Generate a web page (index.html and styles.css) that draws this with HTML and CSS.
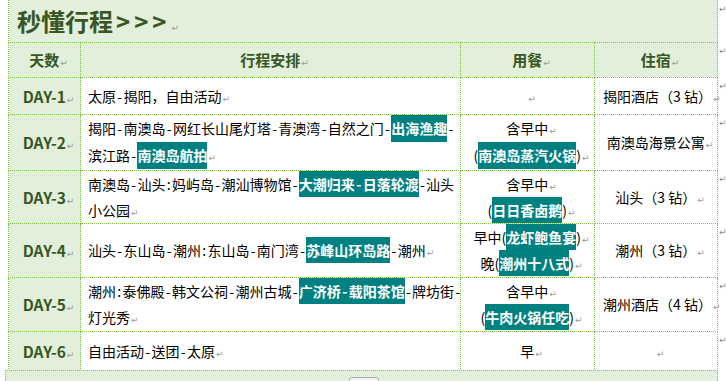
FILE: index.html
```html
<!DOCTYPE html>
<html lang="zh-CN">
<head>
<meta charset="utf-8">
<title>秒懂行程</title>
<link rel="stylesheet" href="styles.css">
</head>
<body>
<div class="page">
  <table class="trip">
    <colgroup>
      <col class="c-day"><col class="c-plan"><col class="c-meal"><col class="c-hotel"><col class="c-end">
    </colgroup>
    <tr class="r-title">
      <td colspan="4" class="title">秒懂行程<span class="arrows">&gt;&gt;&gt;</span><span class="m">↵</span></td>
      <td class="end">↵</td>
    </tr>
    <tr class="r-head">
      <th class="center">天数<span class="m">↵</span></th>
      <th class="center">行程安排<span class="m">↵</span></th>
      <th class="center">用餐<span class="m">↵</span></th>
      <th class="center">住宿<span class="m">↵</span></th>
      <td class="end">↵</td>
    </tr>
    <tr class="r-1">
      <th class="day">DAY-1<span class="m">↵</span></th>
      <td class="plan">太原<span class="d">-</span>揭阳，自由活动<span class="m">↵</span></td>
      <td class="center"><span class="m">↵</span></td>
      <td class="center">揭阳酒店（3 钻）<span class="m">↵</span></td>
      <td class="end">↵</td>
    </tr>
    <tr class="r-2">
      <th class="day">DAY-2<span class="m">↵</span></th>
      <td class="plan tall">揭阳<span class="d">-</span>南澳岛<span class="d">-</span>网红长山尾灯塔<span class="d">-</span>青澳湾<span class="d">-</span>自然之门<span class="d">-</span><span class="hl">出海渔趣</span><span class="d">-</span><br>滨江路<span class="d">-</span><span class="hl">南澳岛航拍</span><span class="m">↵</span></td>
      <td class="center tall">含早中<span class="m">↵</span><br>(<span class="hl">南澳岛蒸汽火锅</span>)<span class="m">↵</span></td>
      <td class="center">南澳岛海景公寓<span class="m">↵</span></td>
      <td class="end">↵</td>
    </tr>
    <tr class="r-3">
      <th class="day">DAY-3<span class="m">↵</span></th>
      <td class="plan">南澳岛<span class="d">-</span>汕头<span class="d">:</span>妈屿岛<span class="d">-</span>潮汕博物馆<span class="d">-</span><span class="hl">大潮归来<span class="d">-</span>日落轮渡</span><span class="d">-</span>汕头<br>小公园<span class="m">↵</span></td>
      <td class="center">含早中<span class="m">↵</span><br>(<span class="hl">日日香卤鹅</span>)<span class="m">↵</span></td>
      <td class="center">汕头（3 钻）<span class="m">↵</span></td>
      <td class="end">↵</td>
    </tr>
    <tr class="r-4">
      <th class="day">DAY-4<span class="m">↵</span></th>
      <td class="plan">汕头<span class="d">-</span>东山岛<span class="d">-</span>潮州<span class="d">:</span>东山岛<span class="d">-</span>南门湾<span class="d">-</span><span class="hl">苏峰山环岛路</span><span class="d">-</span>潮州<span class="m">↵</span></td>
      <td class="center">早中(<span class="hl">龙虾鲍鱼宴</span>)<span class="m">↵</span><br>晚(<span class="hl">潮州十八式</span>)<span class="m">↵</span></td>
      <td class="center">潮州（3 钻）<span class="m">↵</span></td>
      <td class="end">↵</td>
    </tr>
    <tr class="r-5">
      <th class="day">DAY-5<span class="m">↵</span></th>
      <td class="plan">潮州<span class="d">:</span>泰佛殿<span class="d">-</span>韩文公祠<span class="d">-</span>潮州古城<span class="d">-</span><span class="hl">广济桥<span class="d">-</span>载阳茶馆</span><span class="d">-</span>牌坊街<span class="d">-</span><br>灯光秀<span class="m">↵</span></td>
      <td class="center">含早中<span class="m">↵</span><br>(<span class="hl">牛肉火锅任吃</span>)<span class="m">↵</span></td>
      <td class="center">潮州酒店（4 钻）<span class="m">↵</span></td>
      <td class="end">↵</td>
    </tr>
    <tr class="r-6">
      <th class="day">DAY-6<span class="m">↵</span></th>
      <td class="plan">自由活动<span class="d">-</span>送团<span class="d">-</span>太原<span class="m">↵</span></td>
      <td class="center">早<span class="m">↵</span></td>
      <td class="center"><span class="m">↵</span></td>
      <td class="end">↵</td>
    </tr>
  </table>
  <div class="next">
    <span class="handle"></span>
  </div>
</div>
</body>
</html>
```

FILE: styles.css
```css
html, body {
  margin: 0;
  background: #ffffff;
}

body {
  font-family: "Noto Sans CJK SC", "Noto Sans", sans-serif;
  color: #000000;
}

.page {
  padding-left: 5px;
}

.trip {
  margin-left: 3px;
  border-collapse: collapse;
  table-layout: fixed;
  width: 718px;
}

.c-day { width: 72px; }
.c-plan { width: 380px; }
.c-meal { width: 134px; }
.c-hotel { width: 123px; }
.c-end { width: 9px; }

.trip td,
.trip th {
  padding: 0;
  border: 1px dotted #7cc43c;
  font-size: 14px;
  line-height: 26px;
  font-weight: normal;
  vertical-align: middle;
  white-space: nowrap;
}

.trip td.tall {
  line-height: 27px;
}

.trip td.end {
  border: none;
  vertical-align: top;
  font-family: "DejaVu Sans", sans-serif;
  font-size: 9px;
  line-height: 12px;
  color: #8a8a8a;
  padding: 3px 0 0 1px;
}

.r-title { height: 42px; }
.r-head { height: 35px; }
.r-1 { height: 37px; }
.r-2 { height: 56px; }
.r-3 { height: 53px; }
.r-4 { height: 54px; }
.r-5 { height: 54px; }
.r-6 { height: 39px; }

.trip td.title {
  border-top: none;
  background: #e2efda;
  color: #385623;
  font-size: 24px;
  font-weight: bold;
  line-height: 30px;
  padding-left: 8px;
  text-align: left;
}

.arrows {
  letter-spacing: 4px;
  margin-left: 3px;
}

.r-head th {
  background: #e2efda;
  color: #385623;
  font-weight: bold;
  font-size: 15px;
}

.trip th.day {
  background: #e2efda;
  color: #385623;
  font-weight: bold;
  font-size: 15.5px;
  text-align: center;
  padding-left: 8px;
}

.center {
  text-align: center;
  padding-left: 8px !important;
}

.plan {
  text-align: left;
  padding-left: 7px !important;
}

.d {
  padding: 0 1.3px;
}

.hl {
  display: inline-block;
  background: #008080;
  color: #ffffff;
  font-weight: bold;
  vertical-align: top;
}

.m {
  font-family: "DejaVu Sans", sans-serif;
  font-size: 9px;
  line-height: 1;
  font-weight: normal;
  color: #9a9a9a;
  margin-left: 1px;
}

.next {
  margin-top: -1px;
  width: 711px;
  height: 20px;
  background: #e2efda;
  border-top: 1px dotted #7cc43c;
  border-left: 1px dotted #7cc43c;
  border-right: 1px dotted #7cc43c;
  padding-top: 6px;
}

.handle {
  display: block;
  margin-left: 343px;
  width: 28px;
  height: 10px;
  border: 1px solid #a8a8a8;
  border-radius: 3px;
  background: #f4f4f4;
}
```
